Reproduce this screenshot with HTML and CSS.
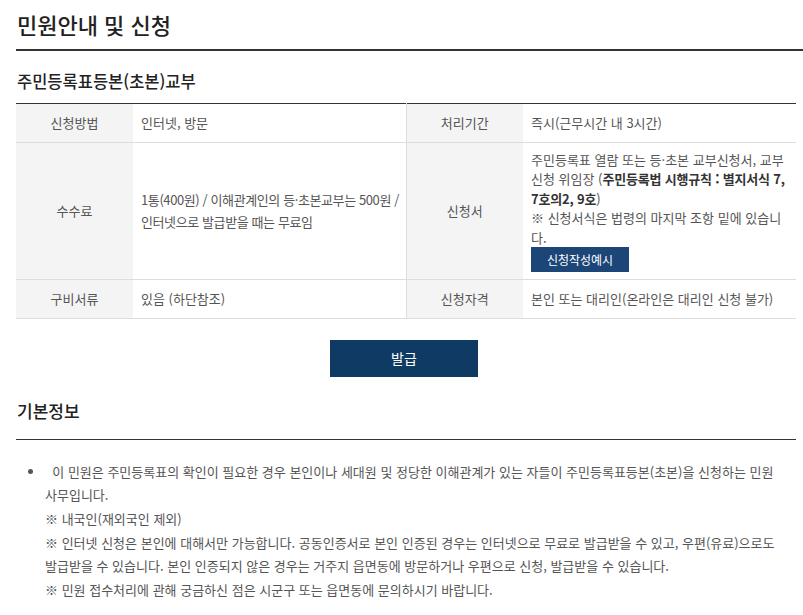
FILE: index.html
```html
<!DOCTYPE html>
<html lang="ko">
<head>
    <meta charset="UTF-8" />
    <title>민원안내 및 신청</title>
    <link rel="stylesheet" href="styles.css">
</head>
<body>
    <main class="page">
        <h1 class="page-title">민원안내 및 신청</h1>

        <section class="service">
            <h2 class="service-name">주민등록표등본(초본)교부</h2>
            <table class="info-table">
                <colgroup>
                    <col class="col-head">
                    <col class="col-body">
                    <col class="col-head">
                    <col class="col-body">
                </colgroup>
                <tr>
                    <th>신청방법</th>
                    <td class="split">인터넷, 방문</td>
                    <th>처리기간</th>
                    <td>즉시(근무시간 내 3시간)</td>
                </tr>
                <tr>
                    <th>수수료</th>
                    <td class="split fee">1통(400원) / 이해관계인의 등·초본교부는 500원 /<br>인터넷으로 발급받을 때는 무료임</td>
                    <th>신청서</th>
                    <td class="nowrap">
                        주민등록표 열람 또는 등·초본 교부신청서, 교부<br>
                        신청 위임장 (<strong>주민등록법 시행규칙 : 별지서식 7,<br>7호의2, 9호</strong>)<br>
                        ※ 신청서식은 법령의 마지막 조항 밑에 있습니<br>다.<br>
                        <a class="btn-sample" href="#">신청작성예시</a>
                    </td>
                </tr>
                <tr>
                    <th>구비서류</th>
                    <td class="split">있음 (하단참조)</td>
                    <th>신청자격</th>
                    <td>본인 또는 대리인(온라인은 대리인 신청 불가)</td>
                </tr>
            </table>
            <div class="actions">
                <a class="btn-issue" href="#">발급</a>
            </div>
        </section>

        <section class="basic">
            <h3 class="basic-title">기본정보</h3>
            <ul class="basic-list">
                <li>&nbsp;&nbsp;이 민원은 주민등록표의 확인이 필요한 경우 본인이나 세대원 및 정당한 이해관계가 있는 자들이 주민등록표등본(초본)을 신청하는 민원<br>사무입니다.<br>
                    ※ 내국인(재외국인 제외)<br>
                    ※ 인터넷 신청은 본인에 대해서만 가능합니다. 공동인증서로 본인 인증된 경우는 인터넷으로 무료로 발급받을 수 있고, 우편(유료)으로도<br>발급받을 수 있습니다. 본인 인증되지 않은 경우는 거주지 읍면동에 방문하거나 우편으로 신청, 발급받을 수 있습니다.<br>
                    ※ 민원 접수처리에 관해 궁금하신 점은 시군구 또는 읍면동에 문의하시기 바랍니다.
                </li>
            </ul>
        </section>
    </main>
</body>
</html>
```

FILE: styles.css
```css
* {
    margin: 0;
    padding: 0;
    box-sizing: border-box;
}
body {
    font-family: "Noto Sans CJK KR", "Noto Sans", sans-serif;
    color: #555;
    background-color: #fff;
}
.page {
    padding: 0 7px 0 16px;
}
.page-title {
    margin-right: -7px;
    padding: 9px 0 10px 1px;
    font-size: 22px;
    line-height: 30px;
    font-weight: 500;
    color: #222;
    border-bottom: 2px solid #333;
}
.service-name {
    margin: 18px 0 10px;
    padding-left: 1px;
    font-size: 16.5px;
    line-height: 24px;
    font-weight: 500;
    color: #222;
}
.info-table {
    width: 100%;
    table-layout: fixed;
    border-collapse: collapse;
    border-top: 1px solid #333;
    border-bottom: 1px solid #333;
    font-size: 13px;
    line-height: 19.5px;
}
.col-head {
    width: 15%;
}
.col-body {
    width: 35%;
}
.info-table th,
.info-table td {
    padding: 9px 8px;
    border-bottom: 1px solid #ddd;
    text-align: left;
    vertical-align: middle;
}
.info-table th {
    background-color: #f4f4f4;
    font-weight: normal;
    text-align: center;
}
.info-table td.split {
    border-right: 1px solid #ddd;
}
.info-table td.fee {
    line-height: 22px;
    letter-spacing: -0.4px;
    white-space: nowrap;
}
.info-table td.nowrap {
    white-space: nowrap;
}
.info-table tr:nth-child(2) td {
    padding-top: 7px;
    padding-bottom: 7px;
}
.info-table strong {
    color: #333;
    font-weight: bold;
    letter-spacing: -0.2px;
}
.btn-sample {
    display: inline-block;
    width: 98px;
    height: 25px;
    line-height: 25px;
    text-align: center;
    vertical-align: top;
    background-color: #1c4578;
    color: #fff;
    font-size: 12px;
    text-decoration: none;
}
.actions {
    display: flex;
    justify-content: center;
    margin-top: 21px;
}
.btn-issue {
    display: block;
    width: 148px;
    height: 37px;
    line-height: 37px;
    margin-right: 4px;
    text-align: center;
    background-color: #0e3a63;
    color: #fff;
    font-size: 14px;
    text-decoration: none;
}
.basic-title {
    margin-top: 23px;
    padding: 0 0 17px 1px;
    font-size: 17px;
    line-height: 22px;
    font-weight: 500;
    color: #222;
    border-bottom: 1px solid #333;
}
.basic-list {
    margin-top: 20px;
    padding-left: 29px;
    font-size: 13px;
    line-height: 23.7px;
    white-space: nowrap;
}
```
